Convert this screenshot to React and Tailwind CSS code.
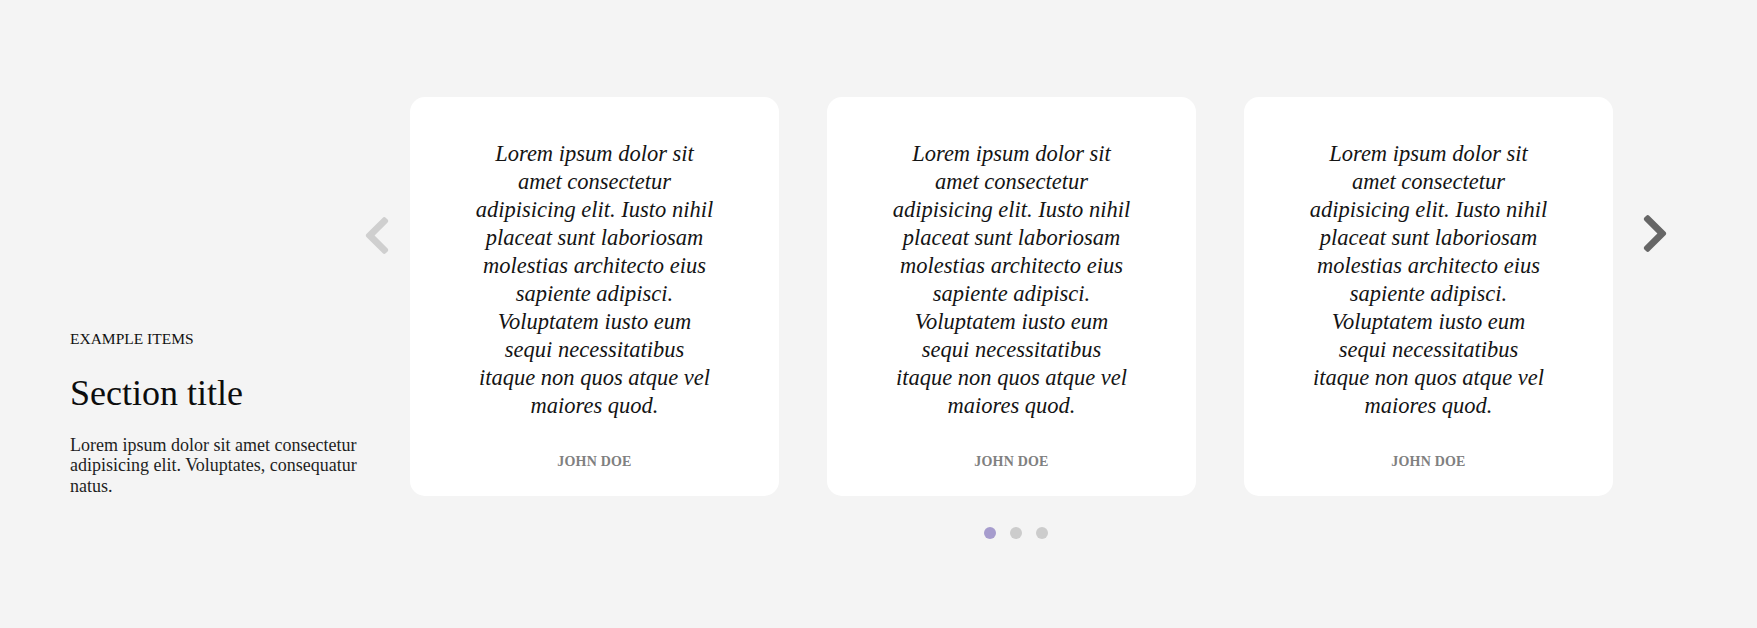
import React from "react";

const quoteLines = [
  "Lorem ipsum dolor sit",
  "amet consectetur",
  "adipisicing elit. Iusto nihil",
  "placeat sunt laboriosam",
  "molestias architecto eius",
  "sapiente adipisci.",
  "Voluptatem iusto eum",
  "sequi necessitatibus",
  "itaque non quos atque vel",
  "maiores quod.",
];

function ChevronLeft({ className }) {
  return (
    <svg viewBox="27 37 266 438" width="24" height="37" className={className} fill="currentColor">
      <path d="M34.52 239.03L228.87 44.69c9.37-9.37 24.57-9.37 33.94 0l22.67 22.67c9.36 9.36 9.37 24.52.04 33.9L131.49 256l154.02 154.75c9.34 9.38 9.32 24.54-.04 33.9l-22.67 22.67c-9.37 9.37-24.57 9.37-33.94 0L34.52 272.97c-9.37-9.37-9.37-24.57 0-33.94z" />
    </svg>
  );
}

function ChevronRight({ className }) {
  return (
    <svg viewBox="27 37 266 438" width="24" height="37" className={className} fill="currentColor">
      <path d="M285.476 272.971L91.132 467.314c-9.373 9.373-24.569 9.373-33.941 0l-22.667-22.667c-9.357-9.357-9.375-24.522-.04-33.901L188.505 256 34.484 101.255c-9.335-9.379-9.317-24.544.04-33.901l22.667-22.667c9.373-9.373 24.569-9.373 33.941 0L285.475 239.03c9.373 9.372 9.373 24.568.001 33.941z" />
    </svg>
  );
}

function Card() {
  return (
    <div className="w-[369px] shrink-0 bg-white rounded-[15px] pt-[43px] pb-[24px] flex flex-col items-center">
      <p className="italic text-[22.5px] leading-[28px] text-[#141414] text-center whitespace-nowrap">
        {quoteLines.map((l, i) => (
          <span key={i} className="block">
            {l}
          </span>
        ))}
      </p>
      <p className="mt-[32px] text-[14px] leading-[20px] font-bold text-[#808080] tracking-[0.2px]">
        JOHN DOE
      </p>
    </div>
  );
}

export default function App() {
  return (
    <div
      className="w-full h-[628px] bg-[#f4f4f4] overflow-hidden"
      style={{ fontFamily: '"Liberation Serif", "Times New Roman", serif' }}
    >
      <div className="grid grid-cols-[295px_1302px] pl-[70px] pt-[97px]">
        <div className="self-end flex flex-col">
          <p className="text-[15.5px] leading-[20px] text-[#111111] uppercase">Example items</p>
          <h2 className="mt-[22px] text-[36px] leading-[44px] text-[#0d0d0d]">Section title</h2>
          <p className="mt-[20px] text-[18px] leading-[20.5px] text-[#1e1e1e] whitespace-nowrap">
            <span className="block">Lorem ipsum dolor sit amet consectetur</span>
            <span className="block">adipisicing elit. Voluptates, consequatur</span>
            <span className="block">natus.</span>
          </p>
        </div>
        <div className="flex items-start">
          <button className="w-[45px] shrink-0 mt-[120px] flex justify-start text-[#cfcfcf]">
            <ChevronLeft />
          </button>
          <div className="flex gap-[48px]">
            <Card />
            <Card />
            <Card />
          </div>
          <button className="w-[54px] shrink-0 mt-[118px] flex justify-end text-[#666666]">
            <ChevronRight />
          </button>
        </div>
        <div />
        <div className="flex justify-center gap-[14px] mt-[31px]">
          <span className="w-[12px] h-[12px] rounded-full bg-[#a69ccd]" />
          <span className="w-[12px] h-[12px] rounded-full bg-[#cccccc]" />
          <span className="w-[12px] h-[12px] rounded-full bg-[#cccccc]" />
        </div>
      </div>
    </div>
  );
}
